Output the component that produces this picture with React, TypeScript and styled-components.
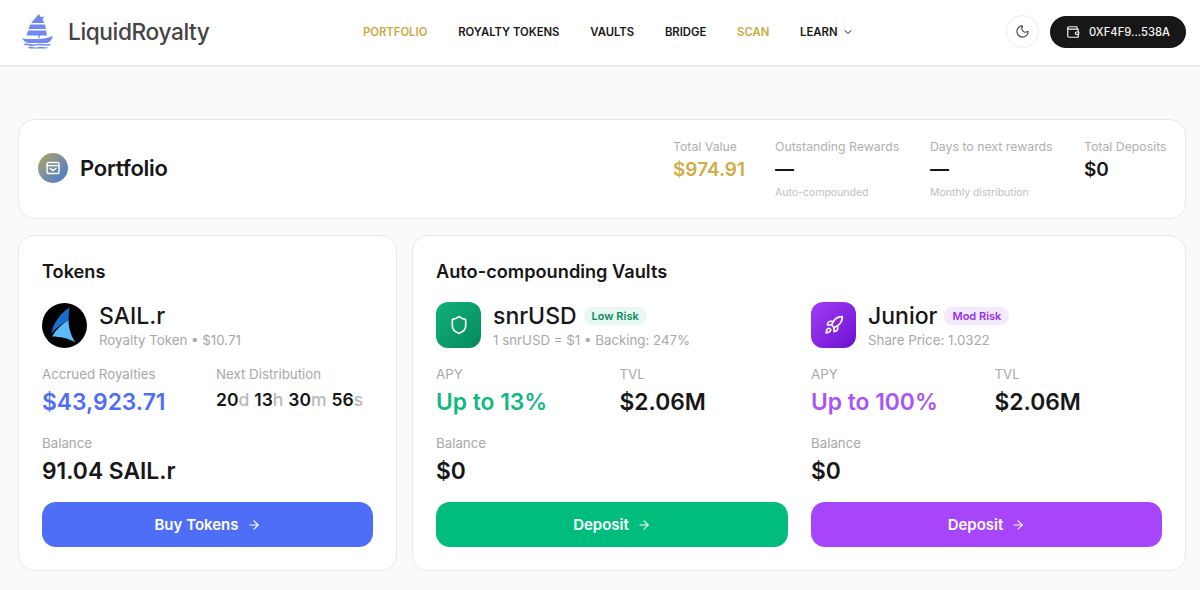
import React from "react";
import styled, { createGlobalStyle } from "styled-components";
import { ArrowRight, ChevronDown, Moon, Rocket, Shield, Wallet } from "lucide-react";

const Global = createGlobalStyle`
  html, body { margin: 0; padding: 0; background: #fafafa; }
  body { font-family: Inter, "Liberation Sans", sans-serif; color: #111; width: 1200px; height: 590px; overflow: hidden; }
  * { box-sizing: border-box; }
`;

const Header = styled.header`
  height: 67px;
  background: #fff;
  border-bottom: 2px solid #ececec;
  display: flex;
  align-items: center;
  padding: 0 14px 2px 22px;
`;
const Brand = styled.div`
  display: flex;
  align-items: center;
  gap: 15px;
  width: 341px;
  font-size: 22.7px;
  font-weight: 500;
  letter-spacing: -0.4px;
  color: #444;
`;
const Nav = styled.nav`
  display: flex;
  align-items: center;
  gap: 30.8px;
  flex: 1;
  font-size: 11.3px;
  font-weight: 600;
  color: #171717;
`;
const NavItem = styled.span<{ $gold?: boolean }>`
  color: ${(p) => (p.$gold ? "#c9a93f" : "#171717")};
  display: flex;
  align-items: center;
  gap: 4px;
`;
const ThemeBtn = styled.div`
  width: 33px;
  height: 33px;
  border: 1px solid #ececec;
  border-radius: 50%;
  background: #fff;
  display: flex;
  align-items: center;
  justify-content: center;
  color: #444;
  margin-right: 11px;
`;
const WalletBtn = styled.div`
  width: 136px;
  height: 32px;
  border-radius: 16px;
  background: #171717;
  color: #f4f4f4;
  display: flex;
  align-items: center;
  justify-content: center;
  gap: 9px;
  font-size: 11.2px;
  font-weight: 500;
`;
const Main = styled.main`
  padding: 52px 14px 0 18px;
  display: flex;
  flex-direction: column;
  gap: 16px;
`;
const Card = styled.section`
  background: #fff;
  border: 1px solid #e8e8e8;
  border-radius: 16px;
`;
const Summary = styled(Card)`
  height: 100px;
  display: flex;
  align-items: flex-start;
  padding: 19px 18px 0 19px;
`;
const TitleWrap = styled.div`
  display: flex;
  align-items: center;
  gap: 12px;
  flex: 1;
  margin-top: 14px;
  font-size: 22px;
  font-weight: 600;
  letter-spacing: -0.25px;
  color: #171717;
`;
const TitleIcon = styled.div`
  width: 30px;
  height: 30px;
  border-radius: 50%;
  background: linear-gradient(135deg, #b5a560, #3f78dc);
  display: flex;
  align-items: center;
  justify-content: center;
  color: #fff;
`;
const Stat = styled.div<{ $w: number }>`
  width: ${(p) => p.$w}px;
`;
const StatLabel = styled.div`
  font-size: 12.3px;
  line-height: 15px;
  color: #b0b0b0;
  white-space: nowrap;
`;
const StatValue = styled.div<{ $gold?: boolean }>`
  font-size: 19px;
  line-height: 24px;
  margin-top: 4px;
  font-weight: 600;
  color: ${(p) => (p.$gold ? "#cfad44" : "#171717")};
`;
const StatNote = styled.div`
  font-size: 10.5px;
  line-height: 13px;
  margin-top: 4px;
  color: #c0c0c0;
  white-space: nowrap;
`;
const Row = styled.div`
  display: flex;
  gap: 15px;
`;
const TokensCard = styled(Card)`
  width: 379px;
  height: 336px;
  padding: 24px 23px 0;
`;
const VaultsCard = styled(Card)`
  flex: 1;
  height: 336px;
  padding: 24px 23px 0;
`;
const CardTitle = styled.h2`
  margin: 0;
  font-size: 18.2px;
  line-height: 22px;
  font-weight: 600;
  color: #171717;
`;
const VaultGrid = styled.div`
  display: grid;
  grid-template-columns: 352px 351px;
  column-gap: 23px;
`;
const Column = styled.div`
  display: flex;
  flex-direction: column;
`;
const Identity = styled.div`
  display: flex;
  align-items: center;
  gap: 12px;
  margin-top: 20px;
  height: 46px;
`;
const SailBadge = styled.div`
  width: 45px;
  height: 45px;
  border-radius: 50%;
  background: #000;
  display: flex;
  align-items: center;
  justify-content: center;
`;
const VaultBadge = styled.div<{ $from: string; $to: string }>`
  width: 45px;
  height: 46px;
  border-radius: 12px;
  background: linear-gradient(135deg, ${(p) => p.$from}, ${(p) => p.$to});
  display: flex;
  align-items: center;
  justify-content: center;
  color: #fff;
`;
const NameBlock = styled.div`
  display: flex;
  flex-direction: column;
`;
const NameRow = styled.div`
  display: flex;
  align-items: center;
  gap: 7px;
  font-size: 23px;
  line-height: 26px;
  font-weight: 500;
  color: #171717;
`;
const Risk = styled.span<{ $bg: string; $fg: string }>`
  height: 18px;
  padding: 0 8px;
  border-radius: 9px;
  font-size: 11px;
  line-height: 18px;
  font-weight: 600;
  background: ${(p) => p.$bg};
  color: ${(p) => p.$fg};
`;
const Sub = styled.div`
  font-size: 13.3px;
  line-height: 16px;
  margin-top: 3px;
  color: #a8a8a8;
`;
const Metrics = styled.div`
  display: grid;
  grid-template-columns: 183.5px 1fr;
  margin-top: 18px;
`;
const TokenMetrics = styled(Metrics)`
  grid-template-columns: 174px 1fr;
`;
const Label = styled.div`
  font-size: 13.3px;
  line-height: 16px;
  color: #a8a8a8;
`;
const Big = styled.div<{ $color?: string }>`
  font-size: 22.8px;
  line-height: 29px;
  margin-top: 5px;
  font-weight: 600;
  color: ${(p) => p.$color || "#171717"};
`;
const Count = styled.div`
  font-size: 17.5px;
  line-height: 22px;
  margin-top: 7px;
  font-weight: 600;
  display: flex;
  gap: 5px;
  color: #171717;
`;
const Unit = styled.span`
  color: #b8b8b8;
  font-weight: 500;
`;
const BalanceBlock = styled.div`
  margin-top: 19px;
`;
const CTA = styled.div<{ $bg: string }>`
  height: 45px;
  margin-top: 17px;
  border-radius: 14px;
  background: ${(p) => p.$bg};
  color: #fff;
  display: flex;
  align-items: center;
  justify-content: center;
  gap: 8px;
  font-size: 15px;
  font-weight: 600;
`;

const Junk = () => (
  <svg width="31" height="35" viewBox="0 0 31 35" fill="#6f88f2">
    <path d="M17 0 L18.5 3 L22 2.5 L20.5 6 L22.5 9 L9 9 Z" />
    <path d="M8.2 10.4 L23 10.4 L24 15 L6.4 15 Z" />
    <path d="M6 16.4 L24.2 16.4 L25 21.5 L4.6 21.5 Z" />
    <rect x="16.4" y="21" width="1.3" height="3" />
    <path d="M0 24.2 C7 25.6 22 25.8 31 22 C30 25.5 28 28 25.5 29 L6 29 C3.4 28 1.2 26.5 0 24.2 Z" />
    <path d="M2 29.8 C6 28.8 9 31.4 14 30.2 C19 29 23 31.2 29 29.8 L28 31.4 C23 32.4 19 30.6 14 31.6 C9 32.8 6 30.4 3 31.4 Z" />
    <path d="M6 33 C10 32.2 12 34.2 16 33.2 C20 32.2 22 33.8 26 33 L24.5 34.6 L7.5 34.6 Z" />
  </svg>
);

const SailMark = () => (
  <svg width="45" height="45" viewBox="0 0 45 45">
    <path d="M27.5 4.5 C19 10 11.5 19 9.5 30.5 C13.5 25.5 19.5 20.5 26.5 17 C26.5 12.5 27 8.5 27.5 4.5 Z" fill="#1770d0" />
    <path d="M26.5 17 C20 21 14 26.5 10 33.5 C18 33.5 27 35.5 33.5 39.5 C29 33 26.5 25 26.5 17 Z" fill="#58bdfc" />
  </svg>
);

const InboxBox = () => (
  <svg width="16" height="16" viewBox="0 0 16 16" fill="none" stroke="#fff" strokeWidth="1.4" strokeLinejoin="round" strokeLinecap="round">
    <rect x="2" y="2.5" width="12" height="11" rx="1.5" />
    <path d="M2 5.6 H14" />
    <path d="M5 8.2 L8 10.6 L11 8.2" />
  </svg>
);

export default function App() {
  return (
    <>
      <Global />
      <Header>
        <Brand>
          <Junk />
          <span>LiquidRoyalty</span>
        </Brand>
        <Nav>
          <NavItem $gold>PORTFOLIO</NavItem>
          <NavItem>ROYALTY TOKENS</NavItem>
          <NavItem>VAULTS</NavItem>
          <NavItem>BRIDGE</NavItem>
          <NavItem $gold>SCAN</NavItem>
          <NavItem>
            LEARN <ChevronDown size={12} strokeWidth={2} />
          </NavItem>
        </Nav>
        <ThemeBtn>
          <Moon size={15} strokeWidth={1.8} />
        </ThemeBtn>
        <WalletBtn>
          <Wallet size={14} strokeWidth={2} />
          <span>0XF4F9...538A</span>
        </WalletBtn>
      </Header>
      <Main>
        <Summary>
          <TitleWrap>
            <TitleIcon>
              <InboxBox />
            </TitleIcon>
            <span>Portfolio</span>
          </TitleWrap>
          <Stat $w={102}>
            <StatLabel>Total Value</StatLabel>
            <StatValue $gold>$974.91</StatValue>
          </Stat>
          <Stat $w={155}>
            <StatLabel>Outstanding Rewards</StatLabel>
            <StatValue>—</StatValue>
            <StatNote>Auto-compounded</StatNote>
          </Stat>
          <Stat $w={154}>
            <StatLabel>Days to next rewards</StatLabel>
            <StatValue>—</StatValue>
            <StatNote>Monthly distribution</StatNote>
          </Stat>
          <Stat $w={83}>
            <StatLabel>Total Deposits</StatLabel>
            <StatValue>$0</StatValue>
          </Stat>
        </Summary>
        <Row>
          <TokensCard>
            <CardTitle>Tokens</CardTitle>
            <Identity>
              <SailBadge>
                <SailMark />
              </SailBadge>
              <NameBlock>
                <NameRow>SAIL.r</NameRow>
                <Sub>Royalty Token • $10.71</Sub>
              </NameBlock>
            </Identity>
            <TokenMetrics>
              <div>
                <Label>Accrued Royalties</Label>
                <Big $color="#4f6ef7">$43,923.71</Big>
              </div>
              <div>
                <Label>Next Distribution</Label>
                <Count>
                  <span>20<Unit>d</Unit></span>
                  <span>13<Unit>h</Unit></span>
                  <span>30<Unit>m</Unit></span>
                  <span>56<Unit>s</Unit></span>
                </Count>
              </div>
            </TokenMetrics>
            <BalanceBlock>
              <Label>Balance</Label>
              <Big>91.04 SAIL.r</Big>
            </BalanceBlock>
            <CTA $bg="#4f6ef7">
              Buy Tokens <ArrowRight size={14} strokeWidth={2} />
            </CTA>
          </TokensCard>
          <VaultsCard>
            <CardTitle>Auto-compounding Vaults</CardTitle>
            <VaultGrid>
              <Column>
                <Identity>
                  <VaultBadge $from="#12b27a" $to="#05895c">
                    <Shield size={20} strokeWidth={2} />
                  </VaultBadge>
                  <NameBlock>
                    <NameRow>
                      snrUSD <Risk $bg="#e6f8f1" $fg="#0e8a62">Low Risk</Risk>
                    </NameRow>
                    <Sub>1 snrUSD = $1 • Backing: 247%</Sub>
                  </NameBlock>
                </Identity>
                <Metrics>
                  <div>
                    <Label>APY</Label>
                    <Big $color="#10b981">Up to 13%</Big>
                  </div>
                  <div>
                    <Label>TVL</Label>
                    <Big>$2.06M</Big>
                  </div>
                </Metrics>
                <BalanceBlock>
                  <Label>Balance</Label>
                  <Big>$0</Big>
                </BalanceBlock>
                <CTA $bg="#00bd7e">
                  Deposit <ArrowRight size={14} strokeWidth={2} />
                </CTA>
              </Column>
              <Column>
                <Identity>
                  <VaultBadge $from="#a13ff5" $to="#6d10cf">
                    <Rocket size={20} strokeWidth={2} />
                  </VaultBadge>
                  <NameBlock>
                    <NameRow>
                      Junior <Risk $bg="#f3e9fe" $fg="#9333ea">Mod Risk</Risk>
                    </NameRow>
                    <Sub>Share Price: 1.0322</Sub>
                  </NameBlock>
                </Identity>
                <Metrics>
                  <div>
                    <Label>APY</Label>
                    <Big $color="#a855f7">Up to 100%</Big>
                  </div>
                  <div>
                    <Label>TVL</Label>
                    <Big>$2.06M</Big>
                  </div>
                </Metrics>
                <BalanceBlock>
                  <Label>Balance</Label>
                  <Big>$0</Big>
                </BalanceBlock>
                <CTA $bg="#a745fb">
                  Deposit <ArrowRight size={14} strokeWidth={2} />
                </CTA>
              </Column>
            </VaultGrid>
          </VaultsCard>
        </Row>
      </Main>
    </>
  );
}
